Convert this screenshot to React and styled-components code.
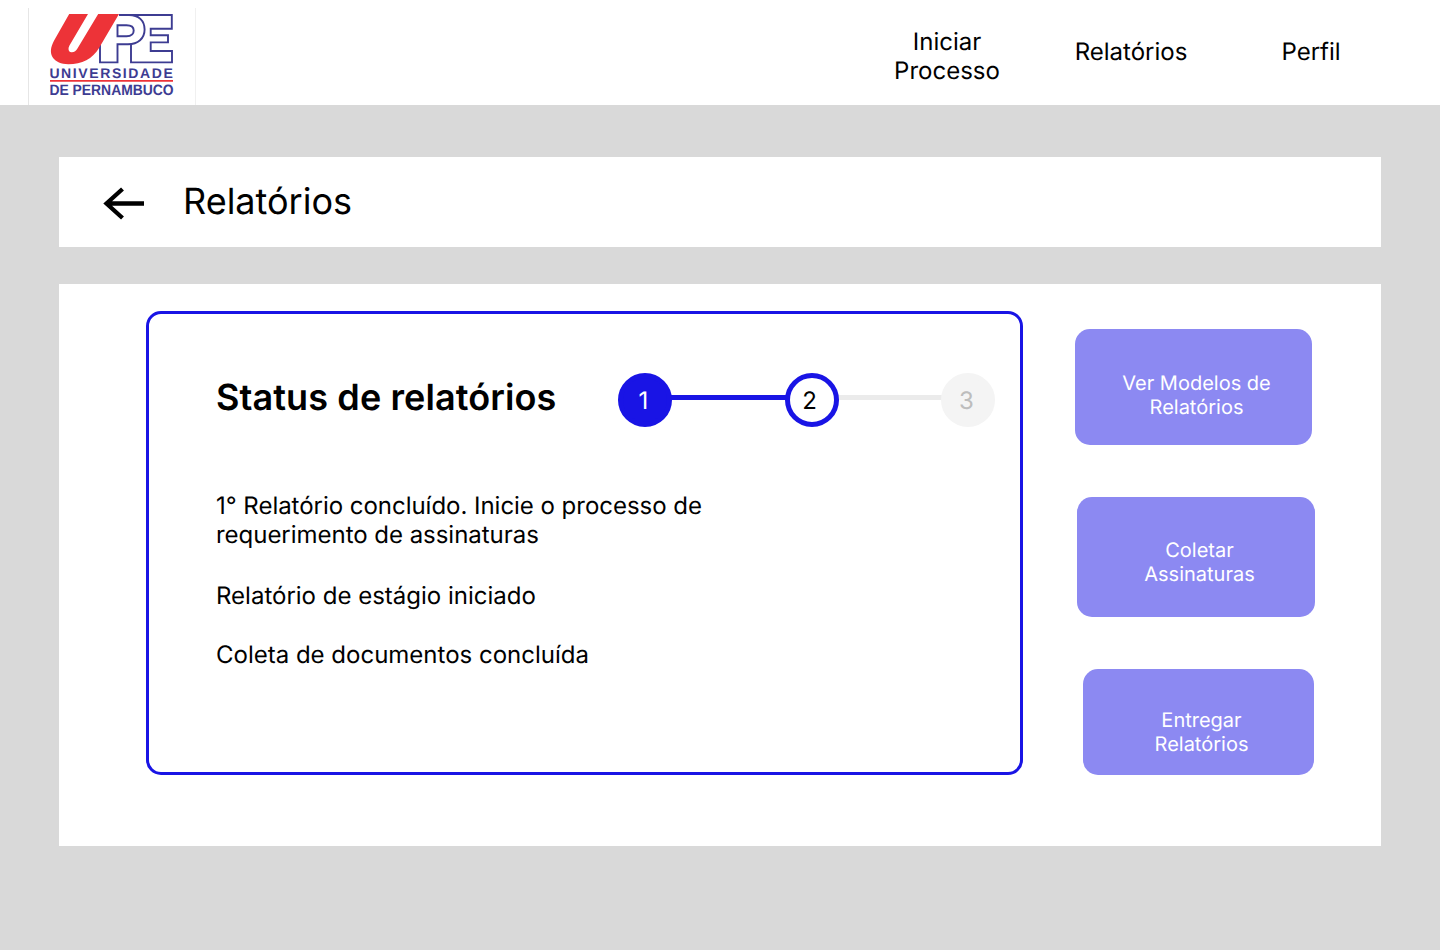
import React from "react";
import styled, { createGlobalStyle } from "styled-components";

const GlobalStyle = createGlobalStyle`
  *, *::before, *::after { box-sizing: border-box; }
  body { margin: 0; background: #d9d9d9; }
  h1, h2, p { margin: 0; }
  button { border: 0; margin: 0; }
`;

const Page = styled.div`
  height: 950px;
  width: 1440px;
  overflow: hidden;
  background: #d9d9d9;
  color: #000;
  font-family: Inter, sans-serif;
  text-rendering: geometricPrecision;
`;

const Header = styled.header`
  height: 105px;
  background: #fff;
  display: flex;
  justify-content: space-between;
  padding: 8px 99px 0 28px;
`;

const LogoFrame = styled.div`
  width: 168px;
  height: 97px;
  border-left: 1px solid #e6e6e6;
  border-right: 1px solid #f0f0f0;

  svg { display: block; margin-left: -1px; }
`;

const Nav = styled.nav`
  display: flex;
  align-items: flex-start;
`;

const NavLink = styled.a`
  width: ${(p) => p.$width}px;
  margin-right: ${(p) => p.$gap || 0}px;
  padding-top: ${(p) => p.$top}px;
  font-size: 24px;
  line-height: 29px;
  text-align: center;
  color: #000;
`;

const Main = styled.main`
  padding: 52px 59px 0;
  display: flex;
  flex-direction: column;
  gap: 37px;
`;

const TitleBar = styled.section`
  height: 90px;
  background: #fff;
  display: flex;
  align-items: flex-start;
  padding: 22px 0 0 44px;
`;

const BackIcon = styled.svg`
  display: block;
  width: 42px;
  height: 34px;
  margin: 7px 38px 0 0;
`;

const Title = styled.h1`
  font-size: 36px;
  line-height: 44px;
  font-weight: 400;
`;

const Panel = styled.section`
  height: 562px;
  background: #fff;
  display: flex;
  align-items: flex-start;
  padding: 27px 0 0 87px;
`;

const StatusCard = styled.article`
  width: 877px;
  height: 464px;
  border: 3px solid #1914e5;
  border-radius: 15px;
  padding: 59px 25px 0 67px;
`;

const StatusHeader = styled.div`
  display: flex;
  justify-content: space-between;
  align-items: flex-start;
  height: 54px;
`;

const StatusTitle = styled.h2`
  padding-top: 2px;
  font-size: 36px;
  line-height: 44px;
  font-weight: 600;
  letter-spacing: 0.11px;
  white-space: nowrap;
`;

const Stepper = styled.div`
  display: flex;
`;

const stepStyles = {
  done: { background: "#1914e5", color: "#fff", border: "#1914e5", shift: 3 },
  current: { background: "#fff", color: "#000", border: "#1914e5", shift: 5 },
  pending: { background: "#f4f4f4", color: "#bdbdbd", border: "#f4f4f4", shift: 3 },
};

const Step = styled.span`
  z-index: 1;
  width: 54px;
  height: 54px;
  border-radius: 50%;
  border: 5px solid ${(p) => stepStyles[p.$state].border};
  background: ${(p) => stepStyles[p.$state].background};
  color: ${(p) => stepStyles[p.$state].color};
  font-size: 24px;
  line-height: 46px;
  text-align: center;
  padding-right: ${(p) => stepStyles[p.$state].shift}px;
`;

const Connector = styled.span`
  width: ${(p) => p.$width}px;
  height: 5px;
  margin: 22px -1px 0;
  background: ${(p) => (p.$active ? "#1914e5" : "#ebebeb")};
`;

const Messages = styled.div`
  width: 520px;
  padding-top: 64px;
  font-size: 24px;
  line-height: 29px;
`;

const Message = styled.p`
  margin-bottom: ${(p) => p.$gap || 0}px;
  letter-spacing: ${(p) => p.$tracking || 0}px;
`;

const Actions = styled.div`
  display: flex;
  flex-direction: column;
  align-items: flex-start;
  gap: 52px;
  padding: 18px 0 0 52px;
`;

const ActionButton = styled.button`
  width: ${(p) => p.$width}px;
  height: ${(p) => p.$height}px;
  margin-left: ${(p) => p.$indent}px;
  padding: ${(p) => p.$padding};
  display: flex;
  align-items: flex-start;
  justify-content: center;
  border-radius: 15px;
  background: #8c89f2;
  color: #fff;
  font-family: inherit;
  font-size: 20px;
  line-height: 24px;
  font-weight: 400;
  text-align: center;
  text-rendering: inherit;
`;

function UpeLogo() {
  return (
    <svg width="168" height="97" viewBox="28 8 168 97" role="img" aria-label="UPE">
      <g fill="none" stroke="#3d3c92" strokeWidth="1.9">
        <path d="M119 15H171.8V28.8H150.7V35.2H168V42.4H150.7V51H172V62.4H131V44" />
        <path d="M100 45V62.4H117.5V44.2H128C138 44.2 144.6 38.5 144.6 29.5C144.6 20.5 138.5 15 129 15" />
        <path d="M117.5 25.3H126.5C131.3 25.3 133.7 27 133.7 30.5C133.7 34.2 131.3 36.2 126.5 36.2H117.5Z" />
      </g>
      <path
        fill="#ed3338"
        d="M69.2 14H88L69.6 45.2C67.8 48.3 68.3 51.8 71.3 52.2C74 52.5 76 50.8 77.6 48.2L98.2 14H119L99.2 47.7C92.5 59 82 64.2 68.3 64.2C54 64.2 47.4 54.8 52.8 43.3C53.5 41.8 54.4 39.9 55.4 38.2Z"
      />
      <path d="M50 80.9H173" stroke="#ed3338" strokeWidth="1.9" />
      <g fill="#3d3c92" fontFamily="Liberation Sans, sans-serif" fontWeight="700">
        <text x="49.4" y="77.8" fontSize="14" textLength="123.4" lengthAdjust="spacing">UNIVERSIDADE</text>
        <text x="49.4" y="95.3" fontSize="15" textLength="124.3" lengthAdjust="spacingAndGlyphs">DE PERNAMBUCO</text>
      </g>
    </svg>
  );
}

export default function App() {
  return (
    <Page>
      <GlobalStyle />
      <Header>
        <LogoFrame>
          <UpeLogo />
        </LogoFrame>
        <Nav>
          <NavLink $width={106} $gap={74} $top={19}>Iniciar Processo</NavLink>
          <NavLink $width={114} $gap={93} $top={29}>Relatórios</NavLink>
          <NavLink $width={60} $top={29}>Perfil</NavLink>
        </Nav>
      </Header>
      <Main>
        <TitleBar>
          <BackIcon viewBox="0 0 42 34" fill="none" stroke="#000" strokeWidth="4.3">
            <path d="M41 17.5H4M19.5 3L3.5 17.5L19.5 32" />
          </BackIcon>
          <Title>Relatórios</Title>
        </TitleBar>
        <Panel>
          <StatusCard>
            <StatusHeader>
              <StatusTitle>Status de relatórios</StatusTitle>
              <Stepper>
                <Step $state="done">1</Step>
                <Connector $width={115} $active />
                <Step $state="current">2</Step>
                <Connector $width={104} />
                <Step $state="pending">3</Step>
              </Stepper>
            </StatusHeader>
            <Messages>
              <Message $gap={32} $tracking={-0.03}>
                1° Relatório concluído. Inicie o processo de requerimento de assinaturas
              </Message>
              <Message $gap={30}>Relatório de estágio iniciado</Message>
              <Message>Coleta de documentos concluída</Message>
            </Messages>
          </StatusCard>
          <Actions>
            <ActionButton $width={237} $height={116} $indent={0} $padding="42px 36px 0 42px">
              Ver Modelos de Relatórios
            </ActionButton>
            <ActionButton $width={238} $height={120} $indent={2} $padding="41px 56px 0 63px">
              Coletar Assinaturas
            </ActionButton>
            <ActionButton $width={231} $height={106} $indent={8} $padding="39px 62px 0 68px">
              Entregar Relatórios
            </ActionButton>
          </Actions>
        </Panel>
      </Main>
    </Page>
  );
}
